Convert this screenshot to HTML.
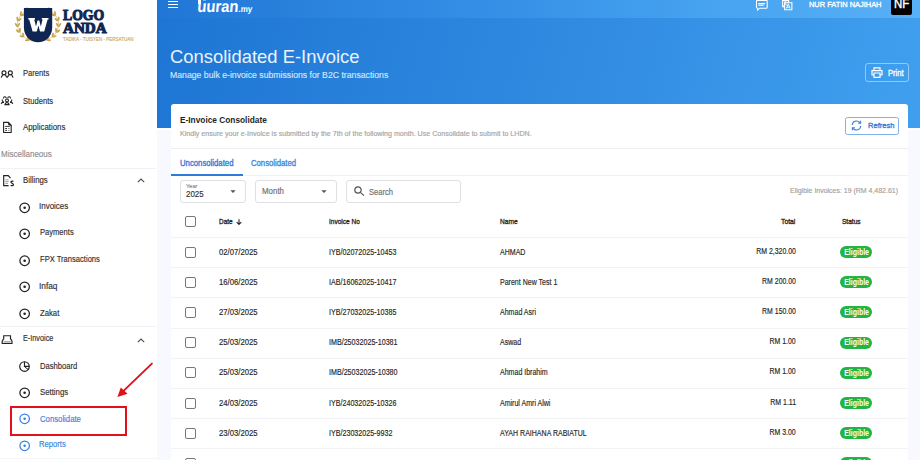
<!DOCTYPE html>
<html><head><meta charset="utf-8">
<style>
*{box-sizing:border-box;margin:0;padding:0}
html,body{width:920px;height:460px;overflow:hidden;background:#f7f9fe;font-family:"Liberation Sans",sans-serif;color:#222}
.abs{position:absolute}
.tx{position:absolute;white-space:nowrap;line-height:1;transform-origin:0 0}
.st{-webkit-text-stroke:0.15px currentColor}
.md{-webkit-text-stroke:0.32px currentColor}
#side{position:absolute;left:0;top:0;width:157px;height:460px;background:#fff}
.hdr{position:absolute;left:157px;top:0;width:763px;height:128px;background:linear-gradient(105deg,#1e75d4 0%,#2d87de 45%,#40a0ef 100%)}
.nav{position:absolute;left:157px;top:0;width:763px;height:17.5px;background:linear-gradient(90deg,#2277d6 0%,#3590e6 45%,#46a3f0 72%,#58b0f6 100%)}
.card{position:absolute;left:170.5px;top:103.5px;width:737.5px;height:400px;background:#fff;border-radius:3px}
.cb{position:absolute;left:185px;width:11px;height:11px;border:1.4px solid #777;border-radius:2px}
.rdiv{position:absolute;left:170.5px;width:737.5px;height:1px;background:#f1f3f5}
.badge{position:absolute;left:840.4px;width:31.6px;height:12px;border-radius:6px;background:#22b545;color:#fff;font-size:8.2px;font-weight:bold;line-height:12px;text-align:center;white-space:nowrap}
.badge b{display:inline-block;position:relative;top:0.8px;transform:scaleX(0.85);font-weight:bold}
.radio{position:absolute;left:19.4px;width:10.5px;height:10.5px;border:1.2px solid #222;border-radius:50%}
.radio:after{content:"";position:absolute;left:50%;top:50%;width:2.6px;height:2.6px;margin:-1.3px 0 0 -1.3px;background:#222;border-radius:50%}
.radio.b{border-color:#3b82e0}
.radio.b:after{background:#3b82e0}
.chev{position:absolute;left:137px}
</style></head><body>
<div id="side"></div>
<div class="abs" style="left:0;top:457.8px;width:157px;height:1px;background:#f4f5f7"></div>
<!-- logo -->
<svg class="abs" style="left:0;top:0" width="140" height="50" viewBox="0 0 140 50">
<g fill="#c9a44e"><ellipse cx="27.40" cy="11.30" rx="2.3" ry="0.95" transform="rotate(361.7 27.40 11.30)"/>
<ellipse cx="48.60" cy="11.30" rx="2.3" ry="0.95" transform="rotate(-181.7 48.60 11.30)"/>
<ellipse cx="26.27" cy="9.19" rx="2.3" ry="0.95" transform="rotate(301.7 26.27 9.19)"/>
<ellipse cx="49.73" cy="9.19" rx="2.3" ry="0.95" transform="rotate(-121.7 49.73 9.19)"/>
<ellipse cx="22.62" cy="14.97" rx="2.3" ry="0.95" transform="rotate(342.8 22.62 14.97)"/>
<ellipse cx="53.38" cy="14.97" rx="2.3" ry="0.95" transform="rotate(-162.8 53.38 14.97)"/>
<ellipse cx="20.86" cy="13.34" rx="2.3" ry="0.95" transform="rotate(282.8 20.86 13.34)"/>
<ellipse cx="55.14" cy="13.34" rx="2.3" ry="0.95" transform="rotate(-102.8 55.14 13.34)"/>
<ellipse cx="19.62" cy="19.68" rx="2.3" ry="0.95" transform="rotate(321.4 19.62 19.68)"/>
<ellipse cx="56.38" cy="19.68" rx="2.3" ry="0.95" transform="rotate(-141.4 56.38 19.68)"/>
<ellipse cx="17.39" cy="18.81" rx="2.3" ry="0.95" transform="rotate(261.4 17.39 18.81)"/>
<ellipse cx="58.61" cy="18.81" rx="2.3" ry="0.95" transform="rotate(-81.4 58.61 18.81)"/>
<ellipse cx="18.71" cy="24.91" rx="2.3" ry="0.95" transform="rotate(298.2 18.71 24.91)"/>
<ellipse cx="57.29" cy="24.91" rx="2.3" ry="0.95" transform="rotate(-118.2 57.29 24.91)"/>
<ellipse cx="16.31" cy="24.98" rx="2.3" ry="0.95" transform="rotate(238.2 16.31 24.98)"/>
<ellipse cx="59.69" cy="24.98" rx="2.3" ry="0.95" transform="rotate(-58.2 59.69 24.98)"/>
<ellipse cx="19.95" cy="30.09" rx="2.3" ry="0.95" transform="rotate(275.2 19.95 30.09)"/>
<ellipse cx="56.05" cy="30.09" rx="2.3" ry="0.95" transform="rotate(-95.2 56.05 30.09)"/>
<ellipse cx="17.77" cy="31.10" rx="2.3" ry="0.95" transform="rotate(215.2 17.77 31.10)"/>
<ellipse cx="58.23" cy="31.10" rx="2.3" ry="0.95" transform="rotate(-35.2 58.23 31.10)"/>
<ellipse cx="23.25" cy="34.68" rx="2.3" ry="0.95" transform="rotate(254.2 23.25 34.68)"/>
<ellipse cx="52.75" cy="34.68" rx="2.3" ry="0.95" transform="rotate(-74.2 52.75 34.68)"/>
<ellipse cx="21.58" cy="36.40" rx="2.3" ry="0.95" transform="rotate(194.2 21.58 36.40)"/>
<ellipse cx="54.42" cy="36.40" rx="2.3" ry="0.95" transform="rotate(-14.2 54.42 36.40)"/>
<ellipse cx="28.27" cy="38.14" rx="2.3" ry="0.95" transform="rotate(235.6 28.27 38.14)"/>
<ellipse cx="47.73" cy="38.14" rx="2.3" ry="0.95" transform="rotate(-55.6 47.73 38.14)"/>
<ellipse cx="27.23" cy="40.30" rx="2.3" ry="0.95" transform="rotate(175.6 27.23 40.30)"/>
<ellipse cx="48.77" cy="40.30" rx="2.3" ry="0.95" transform="rotate(4.4 48.77 40.30)"/></g>
<path d="M27.75 9.78 L26.72 10.31 L25.72 10.89 L24.77 11.52 L23.86 12.19 L23.01 12.91 L22.20 13.66 L21.46 14.46 L20.77 15.29 L20.14 16.15 L19.57 17.05 L19.07 17.97 L18.64 18.91 L18.27 19.87 L17.98 20.85 L17.75 21.84 L17.60 22.84 L17.52 23.85 L17.50 24.86 L17.57 25.86 L17.70 26.87 L17.90 27.86 L18.18 28.84 L18.53 29.81 L18.94 30.76 L19.42 31.68 L19.97 32.59 L20.58 33.46 L21.25 34.30 L21.98 35.11 L22.77 35.88 L23.61 36.60 L24.50 37.29 L25.44 37.93 L26.42 38.53 L27.44 39.07 L28.50 39.57 L29.60 40.01 L30.72 40.39 L31.87 40.72" stroke="#c9a44e" stroke-width="0.6" fill="none"/><path d="M48.25 9.78 L49.28 10.31 L50.28 10.89 L51.23 11.52 L52.14 12.19 L52.99 12.91 L53.80 13.66 L54.54 14.46 L55.23 15.29 L55.86 16.15 L56.43 17.05 L56.93 17.97 L57.36 18.91 L57.73 19.87 L58.02 20.85 L58.25 21.84 L58.40 22.84 L58.48 23.85 L58.50 24.86 L58.43 25.86 L58.30 26.87 L58.10 27.86 L57.82 28.84 L57.47 29.81 L57.06 30.76 L56.58 31.68 L56.03 32.59 L55.42 33.46 L54.75 34.30 L54.02 35.11 L53.23 35.88 L52.39 36.60 L51.50 37.29 L50.56 37.93 L49.58 38.53 L48.56 39.07 L47.50 39.57 L46.40 40.01 L45.28 40.39 L44.13 40.72" stroke="#c9a44e" stroke-width="0.6" fill="none"/>
<path d="M23.9 8.1 H52.2 V27.5 C52.2 36.5 45.5 42.2 38.05 42.2 C30.6 42.2 23.9 36.5 23.9 27.5 Z" fill="#0f2652"/>
</svg>
<svg class="abs" style="left:27.6px;top:18.4px" width="21" height="14" viewBox="-0.3 0 21 14"><path fill="#fff" d="M0 0 H6.7 V1.5 H5.9 L7.7 8.6 L9.2 2.4 H11 L12.5 8.6 L14.3 1.5 H13.5 V0 H20.2 V1.5 H19.3 L15.9 13.4 H11.7 L10.1 7.6 L8.5 13.4 H4.3 L0.9 1.5 H0 Z"/></svg>
<div class="abs" style="left:62.6px;top:7.1px;font-family:'Liberation Serif',serif;font-weight:bold;font-size:15.4px;line-height:15.4px;color:#0f2652;-webkit-text-stroke:1.1px #0f2652;white-space:nowrap;transform:scaleX(0.89);transform-origin:0 0">LOGO</div>
<div class="abs" style="left:62.6px;top:19.9px;font-family:'Liberation Serif',serif;font-weight:bold;font-size:15.4px;line-height:15.4px;color:#0f2652;-webkit-text-stroke:1.1px #0f2652;white-space:nowrap;transform:scaleX(0.98);transform-origin:0 0">ANDA</div>
<div class="abs" style="left:62.6px;top:37.1px;font-size:5.5px;line-height:5.5px;color:#c4a55c;-webkit-text-stroke:0.12px #c4a55c;white-space:nowrap;transform:scaleX(0.82);transform-origin:0 0">TADIKA - TUISYEN - PERSATUAN</div>

<!-- sidebar icons -->
<svg class="abs" style="left:0;top:68px" width="15" height="11" viewBox="0 0 15 11" fill="none" stroke="#222" stroke-width="1.15"><circle cx="4" cy="4.8" r="2"/><circle cx="10.3" cy="4.8" r="2"/><path d="M1.2 9.6 C1.6 8.4 2.2 7.6 2.8 7.2 M5.3 7.2 C5.9 7.6 6.6 8.6 7.1 9.3 C7.6 8.6 8.3 7.6 8.9 7.2 M11.5 7.2 C12.1 7.6 12.7 8.4 13.1 9.6"/></svg>
<svg class="abs" style="left:0;top:94px" width="14" height="12" viewBox="0 0 14 12" fill="none" stroke="#222" stroke-width="1.1"><circle cx="7" cy="6.4" r="1.45"/><path d="M3.4 4.6 C3.4 3.2 4.2 2.8 4.8 2.8 C5.6 2.8 6.2 3.4 6.1 4.4 M10.6 4.6 C10.6 3.2 9.8 2.8 9.2 2.8 C8.4 2.8 7.8 3.4 7.9 4.4"/><path d="M2.4 5.6 C2 6.4 2.4 7.6 3.6 7.6 M11.6 5.6 C12 6.4 11.6 7.6 10.4 7.6"/><path d="M1.2 9.8 C1.4 8.8 2.2 8.4 3.2 8.4 H4 M12.8 9.8 C12.6 8.8 11.8 8.4 10.8 8.4 H10"/><path d="M4.9 10.6 C5 9.2 5.8 8.6 7 8.6 C8.2 8.6 9 9.2 9.1 10.6 Z"/></svg>
<svg class="abs" style="left:0;top:118px" width="16" height="18" viewBox="0 0 16 18" fill="none" stroke="#222" stroke-width="1.1"><path d="M3.6 4.4 H8.3 L11.2 7.3 V14.5 H3.6 Z"/><path d="M8.3 4.4 L11.2 7.3 L8.6 7.1 Z" fill="#222" stroke-width="0.6"/><path d="M5.2 8.4 H9.8" stroke-width="0.9"/><path d="M5.2 10.5 H7 M5.2 12.4 H7" stroke-width="0.9"/><path d="M8 10.5 H9.8 M8 12.4 H9.8" stroke-width="0.7" stroke="#777"/></svg>
<div class="abs" style="left:0;top:167.5px;width:156px;height:1px;background:#f1f2f4"></div>
<svg class="abs" style="left:0;top:172px" width="16" height="18" viewBox="0 0 16 18" fill="none" stroke="#222" stroke-width="1.15"><path d="M8.6 13.6 H3.7 V3.6 H8.2 L10.5 6.2"/><path d="M5.3 7.8 H8.6 M5.3 9.6 H8.6 M5.3 11.4 H8" stroke="#888" stroke-width="0.8"/><path d="M13.4 9.5 C12.8 8.9 11 9 11 10.2 C11 11.2 13.5 11.3 13.5 12.7 C13.5 13.9 11.4 14 10.7 13.3" stroke-width="1.25"/></svg>
<svg class="abs chev" style="top:178px" width="8" height="5" viewBox="0 0 8 5" fill="none" stroke="#505050" stroke-width="1.15"><path d="M0.8 4.2 L4 1 L7.2 4.2"/></svg>
<svg class="abs" style="left:19px;top:201.8px" width="12" height="12" viewBox="0 0 12 12"><circle cx="5.65" cy="5.75" r="4.75" fill="none" stroke="#222" stroke-width="1.25"/><circle cx="5.65" cy="5.75" r="1.3" fill="#222"/></svg>
<svg class="abs" style="left:19px;top:228.3px" width="12" height="12" viewBox="0 0 12 12"><circle cx="5.65" cy="5.75" r="4.75" fill="none" stroke="#222" stroke-width="1.25"/><circle cx="5.65" cy="5.75" r="1.3" fill="#222"/></svg>
<svg class="abs" style="left:19px;top:254.9px" width="12" height="12" viewBox="0 0 12 12"><circle cx="5.65" cy="5.75" r="4.75" fill="none" stroke="#222" stroke-width="1.25"/><circle cx="5.65" cy="5.75" r="1.3" fill="#222"/></svg>
<svg class="abs" style="left:19px;top:281.4px" width="12" height="12" viewBox="0 0 12 12"><circle cx="5.65" cy="5.75" r="4.75" fill="none" stroke="#222" stroke-width="1.25"/><circle cx="5.65" cy="5.75" r="1.3" fill="#222"/></svg>
<svg class="abs" style="left:19px;top:307.9px" width="12" height="12" viewBox="0 0 12 12"><circle cx="5.65" cy="5.75" r="4.75" fill="none" stroke="#222" stroke-width="1.25"/><circle cx="5.65" cy="5.75" r="1.3" fill="#222"/></svg>
<div class="abs" style="left:0;top:326px;width:156px;height:1px;background:#f1f2f4"></div>
<svg class="abs" style="left:0;top:330px" width="16" height="18" viewBox="0 0 16 18" fill="none" stroke="#222" stroke-width="1.15"><path d="M3.7 9.6 V5.7 H10.5 V9.6"/><path d="M3.4 9 L2.2 11.2 V13.5 H12 V11.2 L10.8 9"/><path d="M3.5 11.9 H10.7" stroke="#666" stroke-width="0.9"/></svg>
<svg class="abs chev" style="top:337.5px" width="8" height="5" viewBox="0 0 8 5" fill="none" stroke="#505050" stroke-width="1.15"><path d="M0.8 4.2 L4 1 L7.2 4.2"/></svg>
<svg class="abs" style="left:19px;top:360.7px" width="11" height="11" viewBox="0 0 11 11" fill="none" stroke="#222" stroke-width="1.15"><circle cx="5.5" cy="5.5" r="4.8"/><path d="M5.5 0.8 V5.4 H10.2"/><path d="M5.9 6.1 L9.3 8.5" stroke-width="1"/></svg>
<svg class="abs" style="left:19px;top:386.9px" width="12" height="12" viewBox="0 0 12 12"><circle cx="5.65" cy="5.75" r="4.75" fill="none" stroke="#222" stroke-width="1.25"/><circle cx="5.65" cy="5.75" r="1.3" fill="#222"/></svg>
<svg class="abs" style="left:19px;top:413.4px" width="12" height="12" viewBox="0 0 12 12"><circle cx="5.65" cy="5.75" r="4.75" fill="none" stroke="#3b82e0" stroke-width="1.25"/><circle cx="5.65" cy="5.75" r="1.3" fill="#3b82e0"/></svg>
<svg class="abs" style="left:19px;top:439.9px" width="12" height="12" viewBox="0 0 12 12"><circle cx="5.65" cy="5.75" r="4.75" fill="none" stroke="#3b82e0" stroke-width="1.25"/><circle cx="5.65" cy="5.75" r="1.3" fill="#3b82e0"/></svg>
<!-- red box + arrow -->
<div class="abs" style="left:10px;top:405.9px;width:116.5px;height:30.6px;border:2.1px solid #e3101b"></div>
<svg class="abs" style="left:110px;top:355px" width="50" height="50" viewBox="0 0 50 50"><path d="M41.9 8.6 L13.8 35.6" stroke="#e3101b" stroke-width="1.9" stroke-linecap="round"/><path d="M7.4 42 L10.8 32.4 L17.6 38.7 Z" fill="#e3101b"/></svg>

<div class="hdr"></div>
<div class="nav"></div>
<div class="abs" style="left:157px;top:128.3px;width:763px;height:1.5px;background:#fff"></div>
<!-- hamburger -->
<div class="abs" style="left:168px;top:0.8px;width:10.2px;height:1.1px;background:#fff"></div>
<div class="abs" style="left:168px;top:3.9px;width:10.2px;height:1.1px;background:#fff"></div>
<div class="abs" style="left:168px;top:7.1px;width:10.2px;height:1.1px;background:#fff"></div>
<div class="abs" style="left:196.5px;top:-2.5px;font-size:16.5px;font-weight:bold;color:#fff;line-height:16.5px;white-space:nowrap;transform:matrix(0.9,0,-0.08,1,1,0);transform-origin:0 0">uuran<span style="font-size:9px">.my</span></div>
<div class="abs" style="left:198.3px;top:0;width:2.3px;height:4px;background:#fff"></div>
<div class="abs" style="left:203px;top:0;width:3px;height:1px;background:#5ec8f5"></div>
<!-- nav icons -->
<svg class="abs" style="left:750px;top:0" width="50" height="14" viewBox="0 0 50 14" fill="none" stroke="#fff" stroke-width="1.05">
<path d="M7.5 0.5 H16.6 Q17.2 0.5 17.2 1.1 V7.6 Q17.2 8.2 16.6 8.2 H9.8 L7.6 10.1 V8.2 Q6.5 8.2 6.5 7.6 V1.1 Q6.5 0.5 7.5 0.5 Z"/>
<path d="M8.3 3.6 H15 M8.3 5.3 H13.6" stroke-width="1.1"/>
<path d="M34.6 6.6 H32.6 V0.4 H38.6 V2.4"/>
<path d="M34.6 2.7 H41.9 V9.7 H34.6 Z"/>
<path d="M33.8 1.9 H37.4 M35.6 1.9 C35.4 3.6 34.6 4.6 33.4 5.3 M34.6 3.5 C35.4 4.4 36.3 5 37 5.2" stroke-width="0.8"/>
<path d="M36.3 8.6 L38.25 3.9 L40.2 8.6 M36.9 7.2 H39.6" stroke-width="0.9"/>
</svg>
<div class="abs" style="left:890.6px;top:-3px;width:21.8px;height:18.4px;background:#000;border-radius:2px"></div>
<div class="abs" style="left:894.2px;top:-2.6px;font-size:13px;line-height:13px;color:#fff;white-space:nowrap;-webkit-text-stroke:0.45px #fff;transform:scaleX(0.88);transform-origin:0 0">NF</div>

<div class="abs" style="left:864.9px;top:63.2px;width:44.2px;height:18.6px;border:1.5px solid rgba(255,255,255,.45);border-radius:3px"></div>
<svg class="abs" style="left:870.5px;top:67px" width="12" height="11" viewBox="0 0 12 11" fill="none" stroke="#fff" stroke-width="1.2"><path d="M3 3.5 V0.8 H9 V3.5"/><path d="M3 8 H1 V3.6 H11 V8 H9"/><path d="M3 6 H9 V10.3 H3 Z"/></svg>

<div class="card"></div>
<div class="abs" style="left:845.2px;top:117px;width:54px;height:17.6px;border:1px solid #7fb0ea;border-radius:2.5px"></div>
<svg class="abs" style="left:851px;top:120.3px" width="11" height="11" viewBox="0 0 11 11" fill="none" stroke="#2f7fe0" stroke-width="1.1"><path d="M1.2 5 C1.6 2.5 3.4 1 5.5 1 C7 1 8.2 1.7 9 2.7"/><path d="M9.6 0.8 V3.2 H7.2"/><path d="M9.8 6 C9.4 8.5 7.6 10 5.5 10 C4 10 2.8 9.3 2 8.3"/><path d="M1.4 10.2 V7.8 H3.8"/></svg>
<div class="abs" style="left:170.5px;top:148px;width:737.5px;height:1px;background:#ebedf0"></div>
<div class="abs" style="left:170.5px;top:175px;width:737.5px;height:1px;background:#f1f2f5"></div>
<div class="abs" style="left:171px;top:174px;width:72px;height:2px;background:#2f7bd9"></div>
<!-- filters -->
<div class="abs" style="left:180px;top:180.2px;width:65.7px;height:22.4px;border:1px solid #dfe0e3;border-radius:3px"></div>
<svg class="abs" style="left:229.7px;top:190px" width="6" height="3" viewBox="0 0 6 3"><path d="M0.3 0.2 H5.7 L3 2.9 Z" fill="#555"/></svg>
<div class="abs" style="left:254.8px;top:180.2px;width:82.5px;height:22.4px;border:1px solid #dfe0e3;border-radius:3px"></div>
<svg class="abs" style="left:321.3px;top:190px" width="6" height="3" viewBox="0 0 6 3"><path d="M0.3 0.2 H5.7 L3 2.9 Z" fill="#555"/></svg>
<div class="abs" style="left:346.2px;top:180.2px;width:115px;height:22.4px;border:1px solid #dfe0e3;border-radius:3px"></div>
<svg class="abs" style="left:354px;top:186.3px" width="11" height="10" viewBox="0 0 11 10" fill="none" stroke="#555" stroke-width="1.2"><circle cx="4" cy="4" r="3.2"/><path d="M6.4 6.4 L10 9.6"/></svg>
<!-- table -->
<div class="cb" style="top:216.2px"></div>
<svg class="abs" style="left:236.3px;top:219.2px" width="6" height="6" viewBox="0 0 6 6" fill="none" stroke="#222" stroke-width="1.05"><path d="M3 0.2 V5.3 M0.7 3.1 L3 5.4 L5.3 3.1"/></svg>
<div class="rdiv" style="top:237px"></div>
<div class="rdiv" style="top:267.2px"></div>
<div class="rdiv" style="top:297.4px"></div>
<div class="rdiv" style="top:327.6px"></div>
<div class="rdiv" style="top:357.8px"></div>
<div class="rdiv" style="top:388px"></div>
<div class="rdiv" style="top:418.1px"></div>
<div class="rdiv" style="top:448.3px"></div>
<div class="cb" style="top:246.5px"></div>
<div class="cb" style="top:276.7px"></div>
<div class="cb" style="top:306.9px"></div>
<div class="cb" style="top:337.1px"></div>
<div class="cb" style="top:367.3px"></div>
<div class="cb" style="top:397.5px"></div>
<div class="cb" style="top:427.6px"></div>
<div class="cb" style="top:457.8px"></div>
<div class="badge" style="top:246px"><b>Eligible</b></div>
<div class="badge" style="top:276.2px"><b>Eligible</b></div>
<div class="badge" style="top:306.4px"><b>Eligible</b></div>
<div class="badge" style="top:336.6px"><b>Eligible</b></div>
<div class="badge" style="top:366.8px"><b>Eligible</b></div>
<div class="badge" style="top:397px"><b>Eligible</b></div>
<div class="badge" style="top:427.1px"><b>Eligible</b></div>
<div class="badge" style="top:457.3px"><b>Eligible</b></div>
<div id="t0" class="tx st" style="left:22.80px;top:68.95px;font-size:8.80px;font-weight:normal;color:#2f2f2f;transform:scaleX(0.8674)">Parents</div>
<div id="t1" class="tx st" style="left:22.70px;top:96.61px;font-size:8.80px;font-weight:normal;color:#2f2f2f;transform:scaleX(0.8667)">Students</div>
<div id="t2" class="tx st" style="left:22.70px;top:122.59px;font-size:8.80px;font-weight:normal;color:#2f2f2f;transform:scaleX(0.8937)">Applications</div>
<div id="t3" class="tx st" style="left:0.90px;top:149.57px;font-size:8.80px;font-weight:normal;color:#8d8d8d;transform:scaleX(0.9112)">Miscellaneous</div>
<div id="t4" class="tx st" style="left:22.60px;top:175.68px;font-size:8.80px;font-weight:normal;color:#2f2f2f;transform:scaleX(0.8861)">Billings</div>
<div id="t5" class="tx st" style="left:39.46px;top:201.97px;font-size:8.80px;font-weight:normal;color:#2f2f2f;transform:scaleX(0.9071)">Invoices</div>
<div id="t6" class="tx st" style="left:40.40px;top:228.13px;font-size:8.80px;font-weight:normal;color:#2f2f2f;transform:scaleX(0.8615)">Payments</div>
<div id="t7" class="tx st" style="left:40.30px;top:254.66px;font-size:8.80px;font-weight:normal;color:#2f2f2f;transform:scaleX(0.8626)">FPX Transactions</div>
<div id="t8" class="tx st" style="left:39.46px;top:281.86px;font-size:8.80px;font-weight:normal;color:#2f2f2f;transform:scaleX(0.9437)">Infaq</div>
<div id="t9" class="tx st" style="left:40.30px;top:308.59px;font-size:8.80px;font-weight:normal;color:#2f2f2f;transform:scaleX(0.8770)">Zakat</div>
<div id="t10" class="tx st" style="left:22.60px;top:334.25px;font-size:8.80px;font-weight:normal;color:#2f2f2f;transform:scaleX(0.8289)">E-Invoice</div>
<div id="t11" class="tx st" style="left:40.20px;top:361.71px;font-size:8.80px;font-weight:normal;color:#2f2f2f;transform:scaleX(0.8666)">Dashboard</div>
<div id="t12" class="tx st" style="left:40.20px;top:388.04px;font-size:8.80px;font-weight:normal;color:#2f2f2f;transform:scaleX(0.8839)">Settings</div>
<div id="t13" class="tx st" style="left:40.20px;top:414.83px;font-size:8.80px;font-weight:normal;color:#3b82e0;transform:scaleX(0.8802)">Consolidate</div>
<div id="t14" class="tx st" style="left:39.24px;top:440.37px;font-size:8.80px;font-weight:normal;color:#3b82e0;transform:scaleX(0.8700)">Reports</div>
<div id="t15" class="tx" style="left:170.24px;top:47.74px;font-size:18.85px;font-weight:normal;color:#eaf3fc;transform:scaleX(0.9776)">Consolidated E-Invoice</div>
<div id="t16" class="tx st" style="left:170.24px;top:70.80px;font-size:9.22px;font-weight:normal;color:#d3e6fb;transform:scaleX(0.9424)">Manage bulk e-invoice submissions for B2C transactions</div>
<div id="t17" class="tx md" style="left:887.60px;top:68.76px;font-size:8.38px;font-weight:normal;color:#ffffff;transform:scaleX(0.9082)">Print</div>
<div id="t18" class="tx" style="left:180.00px;top:115.90px;font-size:9.22px;font-weight:bold;color:#1f1f1f;transform:scaleX(0.9014)">E-Invoice Consolidate</div>
<div id="t19" class="tx st" style="left:180.00px;top:130.91px;font-size:6.84px;font-weight:normal;color:#a5a5a5;transform:scaleX(1.0398)">Kindly ensure your e-Invoice is submitted by the 7th of the following month. Use Consolidate to submit to LHDN.</div>
<div id="t20" class="tx md" style="left:867.80px;top:121.54px;font-size:8.10px;font-weight:normal;color:#2f7bd9;transform:scaleX(0.9344)">Refresh</div>
<div id="t21" class="tx md" style="left:179.90px;top:159.82px;font-size:8.24px;font-weight:normal;color:#2f7bd9;transform:scaleX(0.9418)">Unconsolidated</div>
<div id="t22" class="tx md" style="left:251.40px;top:159.82px;font-size:8.24px;font-weight:normal;color:#3d87de;transform:scaleX(0.9356)">Consolidated</div>
<div id="t23" class="tx st" style="left:186.40px;top:183.73px;font-size:5.87px;font-weight:normal;color:#8a8a8a;transform:scaleX(0.9700)">Year</div>
<div id="t24" class="tx st" style="left:186.40px;top:190.49px;font-size:8.52px;font-weight:normal;color:#333333;transform:scaleX(0.9285)">2025</div>
<div id="t25" class="tx st" style="left:261.50px;top:186.85px;font-size:8.38px;font-weight:normal;color:#6f6f6f;transform:scaleX(0.9447)">Month</div>
<div id="t26" class="tx st" style="left:369.30px;top:188.82px;font-size:8.24px;font-weight:normal;color:#6f6f6f;transform:scaleX(0.9194)">Search</div>
<div id="t27" class="tx st" style="left:790.30px;top:187.38px;font-size:7.82px;font-weight:normal;color:#a0a0a0;transform:scaleX(0.8912)">Eligible Invoices: 19 (RM 4,482.61)</div>
<div id="t28" class="tx md" style="left:219.30px;top:217.83px;font-size:7.40px;font-weight:normal;color:#1f1f1f;transform:scaleX(0.8699)">Date</div>
<div id="t29" class="tx md" style="left:328.90px;top:217.83px;font-size:7.40px;font-weight:normal;color:#1f1f1f;transform:scaleX(0.8835)">Invoice No</div>
<div id="t30" class="tx md" style="left:499.80px;top:217.83px;font-size:7.40px;font-weight:normal;color:#1f1f1f;transform:scaleX(0.8912)">Name</div>
<div id="t31" class="tx md" style="left:780.90px;top:217.83px;font-size:7.40px;font-weight:normal;color:#1f1f1f;transform:scaleX(0.9211)">Total</div>
<div id="t32" class="tx md" style="left:841.70px;top:217.83px;font-size:7.40px;font-weight:normal;color:#1f1f1f;transform:scaleX(0.8863)">Status</div>
<div id="t33" class="tx md" style="left:808.90px;top:0.63px;font-size:7.40px;font-weight:normal;color:#ffffff;transform:scaleX(1.0049)">NUR FATIN NAJIHAH</div>
<div id="r0c0" class="tx st" style="left:219.10px;top:247.60px;font-size:8.38px;color:#262626;transform:scaleX(0.9203)">02/07/2025</div>
<div id="r0c1" class="tx st" style="left:328.90px;top:247.60px;font-size:8.38px;color:#262626;transform:scaleX(0.8508)">IYB/02072025-10453</div>
<div id="r0c2" class="tx st" style="left:499.80px;top:247.60px;font-size:8.38px;color:#262626;transform:scaleX(0.8400)">AHMAD</div>
<div id="r0c3" class="tx st" style="right:124.00px;top:246.70px;font-size:8.38px;color:#262626;transform-origin:100% 0;transform:scaleX(0.8274)">RM 2,320.00</div>
<div id="r1c0" class="tx st" style="left:219.10px;top:277.79px;font-size:8.38px;color:#262626;transform:scaleX(0.9203)">16/06/2025</div>
<div id="r1c1" class="tx st" style="left:328.90px;top:277.79px;font-size:8.38px;color:#262626;transform:scaleX(0.8508)">IAB/16062025-10417</div>
<div id="r1c2" class="tx st" style="left:499.80px;top:277.79px;font-size:8.38px;color:#262626;transform:scaleX(0.8400)">Parent New Test 1</div>
<div id="r1c3" class="tx st" style="right:124.00px;top:276.89px;font-size:8.38px;color:#262626;transform-origin:100% 0;transform:scaleX(0.8274)">RM 200.00</div>
<div id="r2c0" class="tx st" style="left:219.10px;top:307.98px;font-size:8.38px;color:#262626;transform:scaleX(0.9203)">27/03/2025</div>
<div id="r2c1" class="tx st" style="left:328.90px;top:307.98px;font-size:8.38px;color:#262626;transform:scaleX(0.8508)">IYB/27032025-10385</div>
<div id="r2c2" class="tx st" style="left:499.80px;top:307.98px;font-size:8.38px;color:#262626;transform:scaleX(0.8400)">Ahmad Asri</div>
<div id="r2c3" class="tx st" style="right:124.00px;top:307.08px;font-size:8.38px;color:#262626;transform-origin:100% 0;transform:scaleX(0.8274)">RM 150.00</div>
<div id="r3c0" class="tx st" style="left:219.10px;top:338.17px;font-size:8.38px;color:#262626;transform:scaleX(0.9203)">25/03/2025</div>
<div id="r3c1" class="tx st" style="left:328.90px;top:338.17px;font-size:8.38px;color:#262626;transform:scaleX(0.8508)">IMB/25032025-10381</div>
<div id="r3c2" class="tx st" style="left:499.80px;top:338.17px;font-size:8.38px;color:#262626;transform:scaleX(0.8400)">Aswad</div>
<div id="r3c3" class="tx st" style="right:124.00px;top:337.27px;font-size:8.38px;color:#262626;transform-origin:100% 0;transform:scaleX(0.8274)">RM 1.00</div>
<div id="r4c0" class="tx st" style="left:219.10px;top:368.36px;font-size:8.38px;color:#262626;transform:scaleX(0.9203)">25/03/2025</div>
<div id="r4c1" class="tx st" style="left:328.90px;top:368.36px;font-size:8.38px;color:#262626;transform:scaleX(0.8508)">IMB/25032025-10380</div>
<div id="r4c2" class="tx st" style="left:499.80px;top:368.36px;font-size:8.38px;color:#262626;transform:scaleX(0.8400)">Ahmad Ibrahim</div>
<div id="r4c3" class="tx st" style="right:124.00px;top:367.46px;font-size:8.38px;color:#262626;transform-origin:100% 0;transform:scaleX(0.8274)">RM 1.00</div>
<div id="r5c0" class="tx st" style="left:219.10px;top:398.55px;font-size:8.38px;color:#262626;transform:scaleX(0.9203)">24/03/2025</div>
<div id="r5c1" class="tx st" style="left:328.90px;top:398.55px;font-size:8.38px;color:#262626;transform:scaleX(0.8508)">IYB/24032025-10326</div>
<div id="r5c2" class="tx st" style="left:499.80px;top:398.55px;font-size:8.38px;color:#262626;transform:scaleX(0.8400)">Amirul Amri Alwi</div>
<div id="r5c3" class="tx st" style="right:124.00px;top:397.65px;font-size:8.38px;color:#262626;transform-origin:100% 0;transform:scaleX(0.8274)">RM 1.11</div>
<div id="r6c0" class="tx st" style="left:219.10px;top:428.74px;font-size:8.38px;color:#262626;transform:scaleX(0.9203)">23/03/2025</div>
<div id="r6c1" class="tx st" style="left:328.90px;top:428.74px;font-size:8.38px;color:#262626;transform:scaleX(0.8508)">IYB/23032025-9932</div>
<div id="r6c2" class="tx st" style="left:499.80px;top:428.74px;font-size:8.38px;color:#262626;transform:scaleX(0.8400)">AYAH RAIHANA RABIATUL</div>
<div id="r6c3" class="tx st" style="right:124.00px;top:427.84px;font-size:8.38px;color:#262626;transform-origin:100% 0;transform:scaleX(0.8274)">RM 3.00</div>
</body></html>
